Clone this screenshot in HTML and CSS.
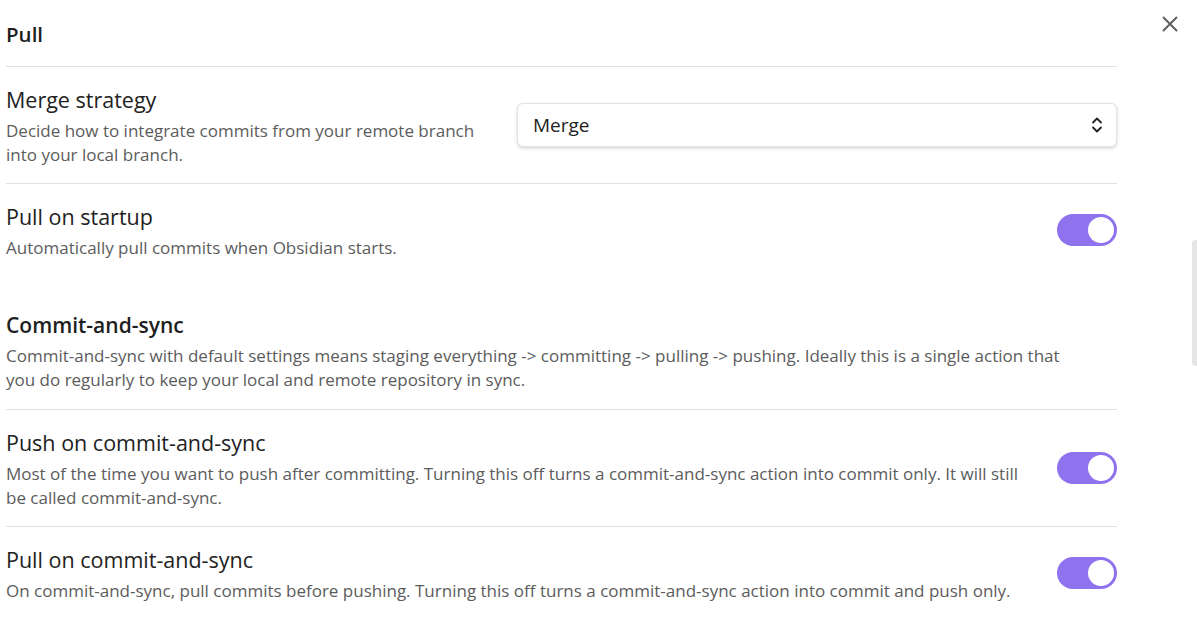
FILE: index.html
```html
<!DOCTYPE html>
<html>
<head>
<meta charset="utf-8">
<link rel="stylesheet" href="styles.css">
</head>
<body>
<div class="modal">
  <div class="close" aria-label="Close">
    <svg width="16" height="16" viewBox="0 0 16 16"><path d="M1.5 1.5 L14.5 14.5 M14.5 1.5 L1.5 14.5" stroke="#5f5f5f" stroke-width="2" stroke-linecap="round"/></svg>
  </div>
  <div class="scrollbar"></div>
  <div class="panel">
    <div class="setting-heading first">
      <div class="heading-name small">Pull</div>
    </div>

    <div class="setting-item">
      <div class="info">
        <div class="name">Merge strategy</div>
        <div class="desc">Decide how to integrate commits from your remote branch into your local branch.</div>
      </div>
      <div class="control">
        <div class="dropdown">
          <span>Merge</span>
          <svg width="12" height="18" viewBox="0 0 12 18"><path d="M2 6.5 L6 2.5 L10 6.5 M2 11.5 L6 15.5 L10 11.5" fill="none" stroke="#222" stroke-width="1.8" stroke-linecap="round" stroke-linejoin="round"/></svg>
        </div>
      </div>
    </div>

    <div class="setting-item">
      <div class="info">
        <div class="name">Pull on startup</div>
        <div class="desc">Automatically pull commits when Obsidian starts.</div>
      </div>
      <div class="control"><div class="toggle"><div class="knob"></div></div></div>
    </div>

    <div class="setting-heading section">
      <div class="heading-name">Commit-and-sync</div>
      <div class="desc">Commit-and-sync with default settings means staging everything -&gt; committing -&gt; pulling -&gt; pushing. Ideally this is a single action that you do regularly to keep your local and remote repository in sync.</div>
    </div>

    <div class="setting-item">
      <div class="info">
        <div class="name">Push on commit-and-sync</div>
        <div class="desc">Most of the time you want to push after committing. Turning this off turns a commit-and-sync action into commit only. It will still be called commit-and-sync.</div>
      </div>
      <div class="control"><div class="toggle"><div class="knob"></div></div></div>
    </div>

    <div class="setting-item">
      <div class="info">
        <div class="name">Pull on commit-and-sync</div>
        <div class="desc">On commit-and-sync, pull commits before pushing. Turning this off turns a commit-and-sync action into commit and push only.</div>
      </div>
      <div class="control"><div class="toggle"><div class="knob"></div></div></div>
    </div>
  </div>
</div>
</body>
</html>
```

FILE: styles.css
```css
html, body {
  margin: 0;
  padding: 0;
  background: #ffffff;
  overflow: hidden;
}
body {
  font-family: "Open Sans", "Noto Sans", sans-serif;
  color: #222222;
  width: 1197px;
  height: 643px;
}
.modal {
  position: relative;
  width: 1197px;
  height: 643px;
}
.close {
  position: absolute;
  left: 1162px;
  top: 16px;
  width: 16px;
  height: 16px;
}
.close svg { display: block; }
.scrollbar {
  position: absolute;
  left: 1192px;
  top: 240px;
  width: 8px;
  height: 126px;
  background: #e6e6e6;
  border-radius: 4px;
}
.panel {
  width: 1111px;
  margin-left: 6px;
}
.setting-heading.first {
  padding: 20px 0 18px;
  border-bottom: 1px solid #e0e0e0;
}
.heading-name {
  font-size: 21px;
  font-weight: 600;
  line-height: 28px;
  color: #1e1e1e;
}
.heading-name.small {
  font-size: 20.5px;
}
.setting-heading.section {
  padding: 35px 0 17px;
}
.setting-heading.section .desc {
  margin-top: 5px;
  padding-right: 24px;
}
.setting-item {
  display: flex;
  align-items: center;
  padding: 19px 0 16px;
  border-top: 1px solid #e0e0e0;
}
.setting-heading.first + .setting-item { border-top: none; }
.info {
  flex: 1 1 auto;
  min-width: 0;
  margin-right: 24px;
}
.name {
  font-size: 21.5px;
  line-height: 28px;
  color: #222222;
  margin-bottom: 5px;
}
.desc {
  font-size: 17px;
  line-height: 24px;
  color: #5c5c5c;
}
.control {
  flex: 0 0 auto;
  display: flex;
  justify-content: flex-end;
  margin-bottom: 4px;
}
.dropdown {
  width: 600px;
  height: 44px;
  box-sizing: border-box;
  border: 1px solid #e3e3e3;
  border-radius: 6px;
  box-shadow: 0 1px 3px rgba(0,0,0,0.12), 0 2px 4px rgba(0,0,0,0.06);
  display: flex;
  align-items: center;
  justify-content: space-between;
  padding: 0 13px 0 15px;
  font-size: 19px;
  color: #222222;
  background: #ffffff;
}
.dropdown svg { display: block; }
.toggle {
  width: 60px;
  height: 32px;
  border-radius: 16px;
  background: #8f72ee;
  position: relative;
  box-sizing: border-box;
}
.knob {
  position: absolute;
  right: 3px;
  top: 3px;
  width: 26px;
  height: 26px;
  border-radius: 50%;
  background: #ffffff;
}
```
